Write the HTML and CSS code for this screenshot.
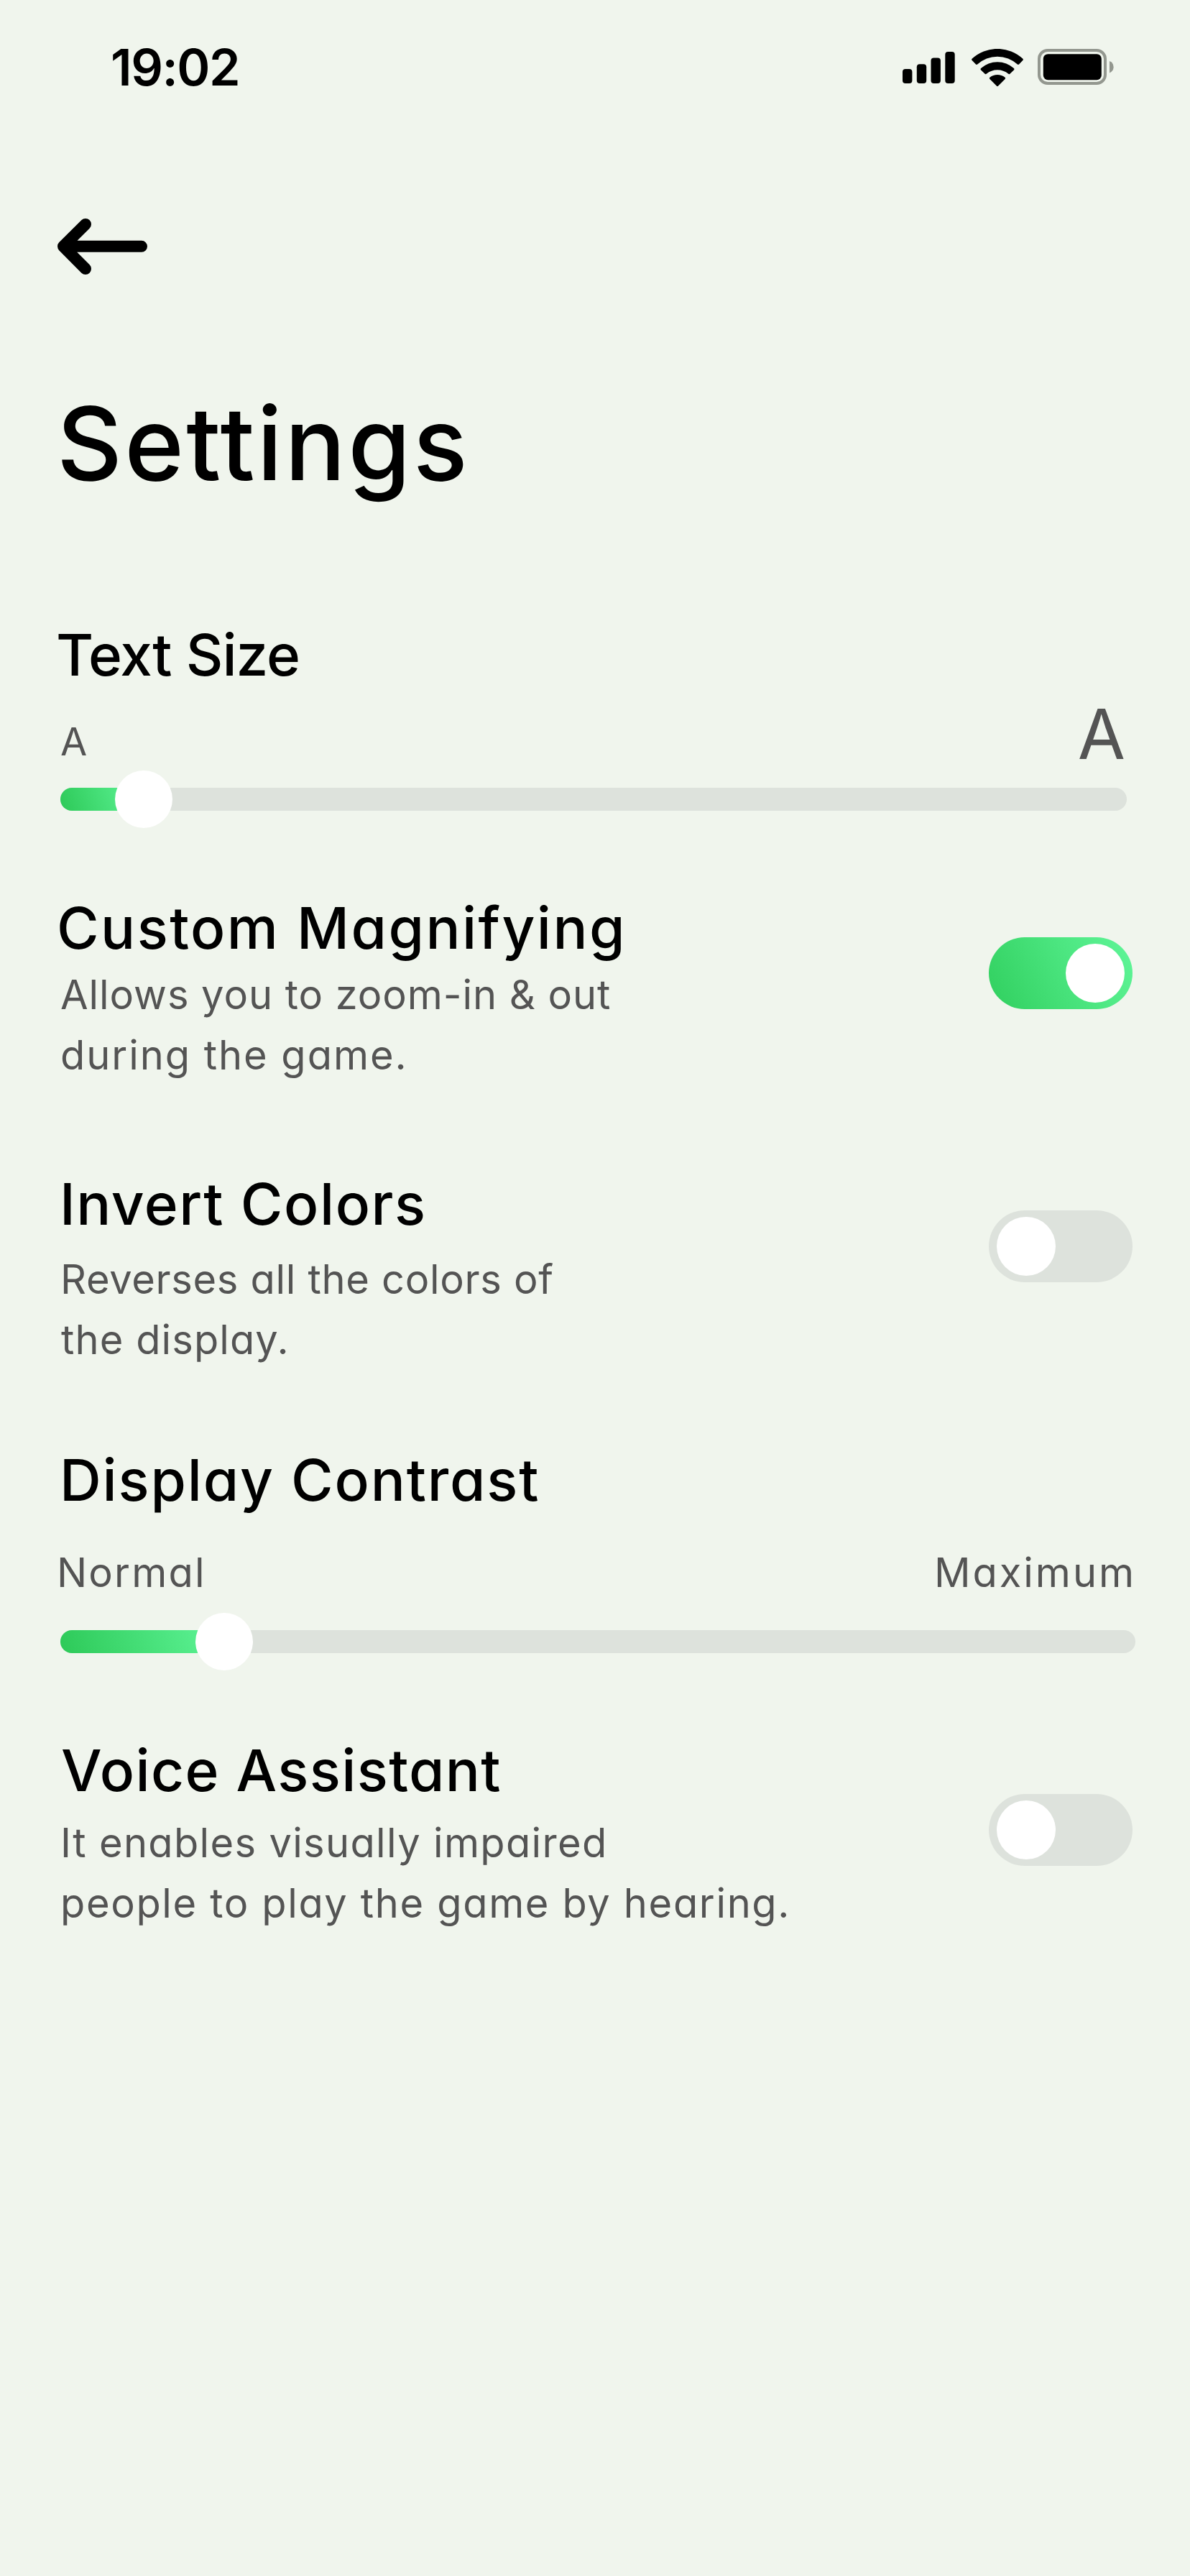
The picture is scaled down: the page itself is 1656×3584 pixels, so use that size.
FILE: index.html
```html
<!DOCTYPE html>
<html lang="en">
<head>
  <meta charset="utf-8">
  <title>Settings</title>
  <link rel="stylesheet" href="styles.css">
</head>
<body>
  <header class="status">
    <span class="status-time">19:02</span>
    <div class="status-icons">
      <svg class="icon-signal" width="74" height="52" viewBox="0 0 74 52">
        <rect x="0" y="28" width="13.4" height="20" rx="4"/>
        <rect x="19.8" y="21.3" width="13.4" height="26.7" rx="4"/>
        <rect x="39.5" y="12.4" width="13.4" height="35.6" rx="4"/>
        <rect x="59.3" y="4" width="13.4" height="44" rx="4"/>
      </svg>
      <svg class="icon-wifi" width="72" height="52" viewBox="0 0 72 52">
        <path d="M0.6 13.8Q-0.4 15 .7 16.1L6 21.6Q7 22.5 8.1 21.6A41 41 0 0 1 63.9 21.6Q65 22.5 66 21.6L71.3 16.1Q72.4 15 71.4 13.8A52 52 0 0 0 .6 13.8Z"/>
        <path d="M13.1 27Q11.9 28.1 12.9 29.2L18.6 34.7Q19.6 35.6 20.7 34.7A24 24 0 0 1 51.3 34.7Q52.4 35.6 53.4 34.7L59.1 29.2Q60.1 28.1 58.9 27A34 34 0 0 0 13.1 27Z"/>
        <path d="M25.4 39.7Q24.3 40.8 25.4 42L35.1 51.7Q36 52.5 36.9 51.7L46.6 42Q47.7 40.8 46.6 39.7A17 17 0 0 0 25.4 39.7Z"/>
      </svg>
      <svg class="icon-battery" width="108" height="52" viewBox="0 0 108 52">
        <rect x="2" y="2" width="92" height="46" rx="12" fill="none" stroke="#93978f" stroke-width="4"/>
        <rect x="7.8" y="7.2" width="81" height="36" rx="6.5"/>
        <path d="M100 17A8.8 8.8 0 0 1 100 33.4Z" fill="#93978f"/>
      </svg>
    </div>
  </header>

  <main class="page">
    <a class="back" href="#" aria-label="Back">
      <svg width="126" height="78" viewBox="0 0 126 78" fill="none" stroke="#000" stroke-width="16" stroke-linecap="round" stroke-linejoin="round">
        <path d="M117 38.8H8M39 8L8 38.8L39 70"/>
      </svg>
    </a>
    <h1 class="title">Settings</h1>

    <section class="setting setting-size">
      <h2 class="heading heading-size">Text Size</h2>
      <div class="size-labels">
        <span class="size-small">A</span>
        <span class="size-large">A</span>
      </div>
      <div class="slider slider-size"><div class="fill"></div><div class="knob"></div></div>
    </section>

    <section class="setting setting-toggle setting-magnify">
      <div>
        <h2 class="heading heading-magnify">Custom Magnifying</h2>
        <p class="note"><span class="line line-allows">Allows you to zoom-in &amp; out</span><span class="line line-during">during the game.</span></p>
      </div>
      <div class="toggle toggle-on"><div class="toggle-knob"></div></div>
    </section>

    <section class="setting setting-toggle setting-invert">
      <div>
        <h2 class="heading heading-invert">Invert Colors</h2>
        <p class="note"><span class="line line-reverses">Reverses all the colors of</span><span class="line line-display">the display.</span></p>
      </div>
      <div class="toggle"><div class="toggle-knob"></div></div>
    </section>

    <section class="setting setting-contrast">
      <h2 class="heading heading-contrast">Display Contrast</h2>
      <div class="contrast-labels">
        <span class="label-normal">Normal</span>
        <span class="label-maximum">Maximum</span>
      </div>
      <div class="slider slider-contrast"><div class="fill"></div><div class="knob"></div></div>
    </section>

    <section class="setting setting-toggle setting-voice">
      <div>
        <h2 class="heading heading-voice">Voice Assistant</h2>
        <p class="note"><span class="line line-enables">It enables visually impaired</span><span class="line line-people">people to play the game by hearing.</span></p>
      </div>
      <div class="toggle"><div class="toggle-knob"></div></div>
    </section>
  </main>
</body>
</html>
```
FILE: styles.css
```css
* { box-sizing: border-box; }

body {
  margin: 0;
  width: 1656px;
  min-height: 3584px;
  background: #f0f5ed;
  color: #000;
  font-family: Inter, "Noto Sans", sans-serif;
  font-feature-settings: "cv11";
}

h1, h2, p { margin: 0; }
svg { display: block; }

/* Status bar */
.status {
  display: flex;
  justify-content: space-between;
  align-items: center;
  padding: 52px 104px 0 154px;
}
.status-time {
  font-size: 70px;
  font-weight: 600;
  line-height: 84px;
  letter-spacing: -0.021em;
}
.status-icons { display: flex; }
.icon-wifi { margin-left: 22px; }
.icon-battery { margin-left: 20px; }

.page {
  display: flex;
  flex-direction: column;
  padding: 168px 76px 0 84px;
}
.back { align-self: flex-start; margin-left: -4px; }

.title {
  margin: 150px 0 0 -5px;
  font-size: 141px;
  font-weight: 500;
  line-height: 170px;
  letter-spacing: 0.0224em;
}

.heading {
  font-size: 80px;
  font-weight: 500;
  line-height: 100px;
  white-space: nowrap;
}
.heading-size { margin-left: -6px; letter-spacing: -0.0125em; }
.heading-magnify { margin-left: -5px; letter-spacing: 0.0305em; }
.heading-invert { margin-left: -1px; letter-spacing: 0.0194em; }
.heading-contrast { margin-left: -1px; letter-spacing: 0.023em; }
.heading-voice { margin-left: 1px; letter-spacing: 0.0171em; }

.note, .contrast-labels {
  font-size: 56px;
  line-height: 84px;
  color: #545454;
}
.line { display: block; white-space: nowrap; }
.line-allows { letter-spacing: 0.0169em; }
.line-during { letter-spacing: 0.0348em; }
.line-reverses { letter-spacing: 0.0122em; }
.line-display { margin-left: 1px; letter-spacing: 0.0196em; }
.line-enables { letter-spacing: 0.0238em; }
.line-people { letter-spacing: 0.0293em; }

.setting-size { margin-top: 159px; }
.setting-magnify { margin-top: 113px; }
.setting-invert { margin-top: 115px; }
.setting-contrast { margin-top: 103px; }
.setting-voice { margin-top: 113px; }

/* Text size */
.size-labels {
  display: flex;
  justify-content: space-between;
  align-items: flex-start;
  padding-right: 14px;
  color: #545454;
}
.size-small { margin-top: 29px; font-size: 54px; line-height: 84px; }
.size-large { font-size: 96px; line-height: 120px; }

/* Contrast */
.contrast-labels {
  display: flex;
  justify-content: space-between;
  margin: 37px -1px 0 -5px;
}
.label-normal { letter-spacing: 0.0386em; }
.label-maximum { letter-spacing: 0.053em; }

/* Sliders */
.slider {
  display: flex;
  align-items: center;
  height: 32px;
  border-radius: 16px;
  background: #dde2dc;
}
.slider-size { width: 1484px; margin-top: 15px; }
.slider-contrast { margin-top: 38px; }
.fill {
  height: 32px;
  border-radius: 16px 0 0 16px;
  background: linear-gradient(70deg, #2dc958, #5ff598);
}
.slider-size .fill { width: 116px; }
.slider-contrast .fill { width: 228px; }
.knob {
  flex: none;
  width: 80px;
  height: 80px;
  margin-left: -40px;
  border-radius: 50%;
  background: #fff;
}

/* Toggles */
.setting-toggle {
  display: flex;
  justify-content: space-between;
  align-items: flex-start;
  padding-right: 4px;
}
.toggle {
  display: flex;
  align-items: center;
  flex: none;
  width: 200px;
  height: 100px;
  padding: 0 11px;
  border-radius: 50px;
  background: #dde2dc;
}
.toggle-on {
  justify-content: flex-end;
  background: linear-gradient(62deg, #30cf5e, #60f699);
}
.toggle-knob {
  width: 82px;
  height: 82px;
  border-radius: 50%;
  background: #fff;
}
.setting-magnify .note { margin-top: 1px; }
.setting-magnify .toggle { margin-top: 63px; }
.setting-invert .note { margin-top: 13px; }
.setting-invert .toggle { margin-top: 59px; }
.setting-voice .note { margin-top: 9px; }
.setting-voice .toggle { margin-top: 83px; }
```
